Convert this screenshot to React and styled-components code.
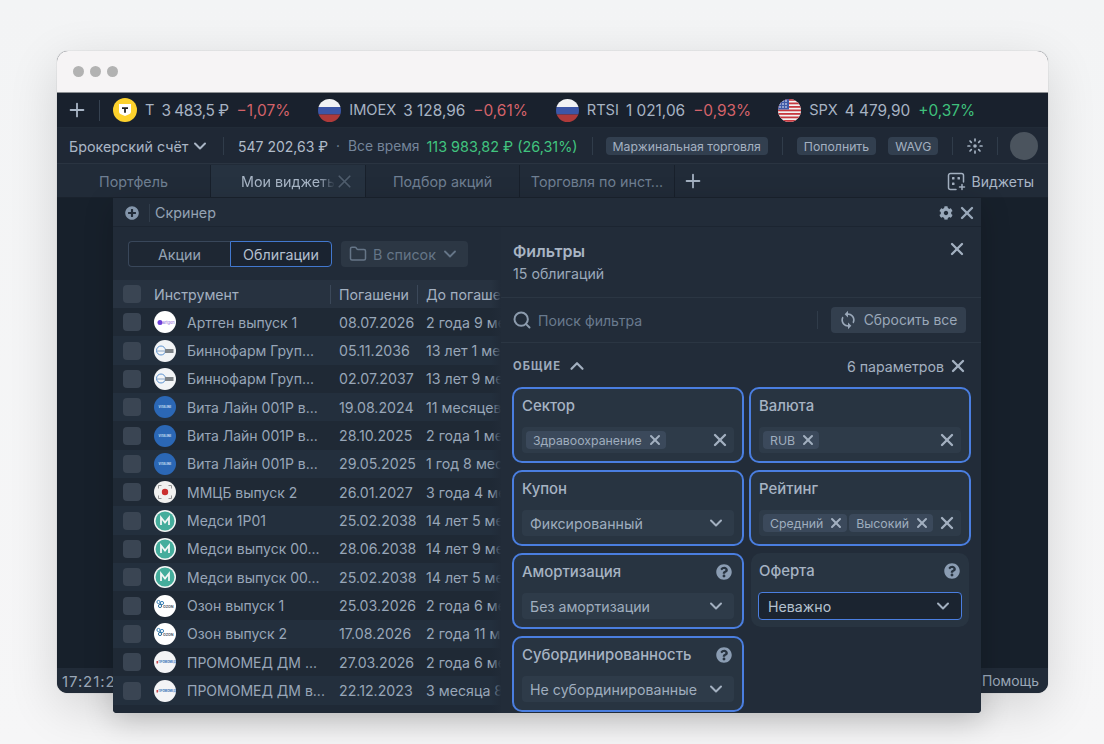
import React from "react";
import styled, { createGlobalStyle } from "styled-components";
import { Plus, ChevronDown, ChevronUp, X, Folder, Search } from "lucide-react";
import { FaCog, FaPlusCircle, FaQuestionCircle } from "react-icons/fa";
import { MdSync } from "react-icons/md";

const Global = createGlobalStyle`
  html, body { margin: 0; padding: 0; background: #f5f6f7; }
  * { box-sizing: border-box; }
  body { font-family: Inter, "Noto Sans", sans-serif; -webkit-font-smoothing: antialiased; }
`;

const Page = styled.div`
  width: 1104px; height: 744px; overflow: hidden; padding: 51px 56px 0 57px;
  background: linear-gradient(#f3f4f5, #f6f6f7);
`;
const Win = styled.div`
  position: relative; width: 991px; height: 642px; border-radius: 11px;
  box-shadow: 0 0 0 1px rgba(0,0,0,.035), 0 14px 50px rgba(0,0,0,.14);
  display: flex; flex-direction: column; background: #17202b;
`;
const TitleBar = styled.div`
  height: 42px; flex: none; background: #f6f4f5; border-radius: 11px 11px 0 0;
  display: flex; align-items: center; gap: 6px; padding: 0 0 0 16px;
  border-bottom: 1px solid #8d9093;
`;
const Dot = styled.i`width: 11px; height: 11px; border-radius: 50%; background: #b2b2b2;`;

const Ticker = styled.div`
  height: 35px; flex: none; background: #19212d; display: flex; align-items: center;
  color: #a7b3c3; font-size: 15.4px; border-bottom: 1px solid #212b37;
`;
const TickPlus = styled.div`
  width: 43px; height: 21px; flex: none; display: flex; align-items: center; padding-left: 9px;
  color: #a9b6c6; border-right: 1px solid #364251;
`;
const TickItem = styled.div`
  display: flex; align-items: center; white-space: nowrap; margin-left: ${p => p.$ml}px;
`;
const TickLabel = styled.span`font-size: 14.6px; margin: 0 7px 0 8px;`;
const TightPrice = styled.span`letter-spacing: -.45px;`;
const Delta = styled.span`margin-left: 8px; color: ${p => (p.$up ? "#3fc07c" : "#d4636a")};`;

const Account = styled.div`
  height: 36px; flex: none; background: #1f2835; display: flex; align-items: center; padding-top: 1px;
  color: #a9b5c5; font-size: 14.3px; white-space: nowrap; border-bottom: 1px solid #2a3441;
`;
const Acc = styled.div`display: flex; align-items: center; gap: 1px; padding-left: 12px; width: 166px;`;
const VLine = styled.i`width: 1px; height: 18px; background: #303c4a; flex: none; margin: ${p => p.$m || "0"};`;
const Sum = styled.span`margin-left: 14px; color: #b0bbc9; font-size: 14px;`;
const Dim = styled.span`color: #75859a; font-size: 13.8px; margin: 0 ${p => p.$r || 0}px 0 ${p => p.$l || 0}px;`;
const Green = styled.span`color: #41c47f; font-size: 14.4px;`;
const Pill = styled.span`
  height: 18px; padding: 0 7px; border-radius: 4px; background: #323f4f; color: #a4b1c1;
  font-size: 12.25px; display: flex; align-items: center; margin-left: ${p => p.$ml || 0}px;
`;
const Avatar = styled.i`width: 28px; height: 28px; border-radius: 50%; background: #4b545e; margin-left: 12px; flex: none;`;

const Tabs = styled.div`
  height: 34px; flex: none; background: #212b38; display: flex; align-items: stretch; padding-top: 1px;
  font-size: 14.3px; color: #6f7f92; border-bottom: 1px solid #1a222d;
`;
const Tab = styled.div`
  position: relative; width: ${p => p.$w}px; flex: none; display: flex; align-items: center; justify-content: center;
  border-right: 1px solid #18202b; white-space: nowrap;
  ${p => p.$active && "background: #263240; color: #a9b6c6; justify-content: flex-start; padding-left: 30px;"}
`;
const TabLabel = styled.span`
  width: 94px; overflow: hidden;
  mask-image: linear-gradient(90deg, #000 82%, transparent);
`;
const TabClose = styled.span`position: absolute; right: 10px; top: 6px; color: #4f5d6d; display: flex;`;
const TabAdd = styled.div`width: 36px; display: flex; align-items: center; justify-content: center; color: #a3b0c0;`;
const TabRight = styled.div`
  margin-left: auto; display: flex; align-items: center; gap: 6px; padding-right: 14px; color: #a9b6c6; font-size: 14px;
`;
const Main = styled.div`flex: 1;`;
const Status = styled.div`
  height: 25px; flex: none; background: #212b38; border-radius: 0 0 10px 10px; display: flex; justify-content: space-between;
  align-items: center; padding: 1px 9px 0 5px; color: #9aa7b7; font-size: 13.9px;
`;
const Clock = styled.span`font-size: 15px; letter-spacing: .9px;`;

const Modal = styled.div`
  position: absolute; left: 56px; top: 147px; width: 868px; height: 515px; background: #212b38;
  border-radius: 0 0 4px 4px; box-shadow: 0 8px 30px rgba(0,0,0,.2); display: flex; flex-direction: column; overflow: hidden;
`;
const ModalHead = styled.div`
  height: 29px; flex: none; display: flex; align-items: center; padding: 1px 4px 0 12px; color: #8496ab; font-size: 14.3px;
  border-bottom: 1px solid #1c2531; background: #222c39;
`;
const ModalTitle = styled.span`margin-left: 5px; color: #94a2b3;`;
const HeadIcons = styled.div`margin-left: auto; display: flex; align-items: center; gap: 4px; color: #9aa9ba;`;
const Body = styled.div`flex: 1; display: flex; min-height: 0;`;

const Left = styled.div`
  position: relative; width: 388px; flex: none; background: #1f2936; display: flex; flex-direction: column; overflow: hidden;
  &::after {
    content: ""; position: absolute; right: 0; top: 0; bottom: 0; width: 10px;
    background: linear-gradient(90deg, rgba(33,43,56,0), #212b38);
  }
`;
const ToolRow = styled.div`height: 53px; flex: none; padding: 14px 0 0 15px; display: flex; align-items: flex-start; background: #212b38;`;
const Seg = styled.div`
  width: 102px; height: 26px; display: flex; align-items: center; justify-content: center; font-size: 14.3px;
  border: 1px solid ${p => (p.$on ? "#4278cf" : "#39475a")}; color: ${p => (p.$on ? "#b3bfce" : "#95a3b4")};
  border-radius: ${p => (p.$on ? "0 4px 4px 0" : "4px 0 0 4px")};
  ${p => p.$on ? "background: #1a2330; border-width: 1.5px;" : "border-right: 0; background: #1e2733;"}
`;
const ListBtn = styled.div`
  width: 127px; height: 26px; margin-left: 9px; border-radius: 4px; background: #2c3744; color: #657587; font-size: 14.3px;
  display: flex; align-items: center; padding-left: 8px; gap: 6px;
`;
const BtnChev = styled(ChevronDown)`margin-left: -2px;`;
const Head = styled.div`
  height: 28px; flex: none; background: #273240; display: grid; grid-template-columns: 41px 177px 87px 1fr; align-items: center;
  color: #a3b0c0; font-size: 14.2px; white-space: nowrap; overflow: hidden;
`;
const Cell = styled.div`
  height: 100%; display: flex; align-items: center; overflow: hidden; padding-left: ${p => p.$pl || 0}px;
  ${p => p.$sep && "position: relative; &::after { content: ''; position: absolute; right: 0; top: 5px; bottom: 4px; width: 1px; background: #3b4859; }"}
`;
const Check = styled.i`width: 18px; height: 18px; border-radius: 4px; background: #3a4553; margin-left: 10px; flex: none;`;
const Row = styled.div`
  height: 28.35px; flex: none; display: grid; grid-template-columns: 41px 177px 87px 1fr; align-items: center;
  background: ${p => (p.$alt ? "#232f3d" : "#1f2935")}; color: #98a6b8; font-size: 14.2px; white-space: nowrap; overflow: hidden;
`;
const Name = styled.div`display: flex; align-items: center; gap: 11px; font-size: 14px;`;
const Logo = styled.svg`width: 22px; height: 22px; flex: none;`;

const Right = styled.div`flex: 1; display: flex; flex-direction: column; background: #222c39; min-width: 0;`;
const FHead = styled.div`
  height: 71px; flex: none; padding: 15px 14px 0 12px; display: flex; justify-content: space-between; align-items: flex-start;
  border-bottom: 1px solid #2b3643;
`;
const FTitle = styled.div`font-size: 16px; font-weight: 600; color: #a9b5c4; line-height: 18px;`;
const FSub = styled.div`font-size: 14.2px; color: #9aa8b9; margin-top: 5px; line-height: 17px;`;
const Close = styled.span`display: flex; color: ${p => p.$c || "#a3b0c0"};`;
const FClose = styled(Close)`margin-top: -3px;`;
const SearchRow = styled.div`
  height: 45px; flex: none; display: flex; align-items: center; padding: 0 15px 0 11px; border-bottom: 1px solid #2b3643;
`;
const Placeholder = styled.span`margin-left: 6px; color: #697a8e; font-size: 14.1px; flex: 1;`;
const ResetBtn = styled.div`
  width: 135px; height: 26px; margin-left: 13px; border-radius: 4px; background: #333f4e; color: #9aa8b9; font-size: 13.9px;
  display: flex; align-items: center; justify-content: center; gap: 6px; padding-right: 2px;
`;
const Section = styled.div`
  height: 44px; flex: none; display: flex; align-items: center; padding: 2px 13px 0 12px;
`;
const SecName = styled.span`font-size: 11.2px; font-weight: 700; letter-spacing: 1.1px; color: #9daabb; margin-right: 5px;`;
const Params = styled.span`margin-left: auto; font-size: 14.2px; color: #a3b0c0; margin-right: 4px;`;
const Grid = styled.div`
  display: grid; grid-template-columns: 232px 222px; grid-auto-rows: 76px; gap: 7px 5px; padding-left: 11px;
`;
const Card = styled.div`
  border-radius: 10px; background: #283441; display: flex; flex-direction: column;
  padding: ${p => (p.$plain ? "7px 7px 0" : "8px 10px 0")};
  box-shadow: inset 0 0 0 ${p => (p.$plain ? 0 : 2)}px ${p => (p.$plain ? "transparent" : "#4a7ee0")};
  ${p => p.$plain && "margin: 0 2px 2px;"}
`;
const CardHead = styled.div`
  height: 22px; flex: none; display: flex; align-items: center; justify-content: space-between; color: #a6b3c3; font-size: 14.9px;
  font-weight: 500; white-space: nowrap; padding: 0 2px 0 ${p => (p.$plain ? 1 : 0)}px;
`;
const Help = styled.span`display: flex; color: #8b9db3;`;
const Control = styled.div`
  height: ${p => (p.$focus ? 28 : 26)}px; margin-top: 10px; border-radius: 4px; background: ${p => (p.$focus ? "#1b2430" : "#2e3b49")};
  ${p => p.$focus && "border: 1px solid #4a7ee0;"}
  display: flex; align-items: center; padding: 0 ${p => (p.$chips ? 4 : 8)}px 0 ${p => (p.$chips ? 4 : p.$focus ? 9 : 8)}px; color: ${p => (p.$focus ? "#b4c0ce" : "#9fadbe")}; font-size: 14.2px; white-space: nowrap; gap: 2px;
  justify-content: space-between;
`;
const Chips = styled.div`display: flex; gap: 2px;`;
const Chip = styled.span`
  height: 18px; padding: 0 3px 0 7px; border-radius: 4px; background: #3b495b; color: #9fadbe; font-size: 12.3px;
  display: flex; align-items: center; gap: 5px; white-space: nowrap;
`;
const ChipX = styled(X)`color: #a3b0c0;`;
const CtlIcon = styled.span`display: flex; color: ${p => p.$c || "#a3b0c0"};`;

const Tinkoff = () => (
  <svg width="24" height="24" viewBox="0 0 24 24">
    <circle cx="12" cy="12" r="12" fill="#fdd22d" />
    <path d="M6 6h12v7.500c0 1.500-1 2.500-2.500 3L12 18l-3.500-1.500C7 16 6 15 6 13.500z" fill="#fff" />
    <path d="M9 9.200h6v1.800h-2.100v3.800h-1.800v-3.800H9z" fill="#222" />
  </svg>
);
const RuFlag = ({ id }) => (
  <svg width="23" height="23" viewBox="0 0 23 23">
    <defs><clipPath id={id}><circle cx="11.500" cy="11.500" r="11.500" /></clipPath></defs>
    <g clipPath={`url(#${id})`}>
      <rect width="23" height="8" fill="#f1f2f4" />
      <rect y="8" width="23" height="7.500" fill="#3c56a6" />
      <rect y="15.500" width="23" height="7.500" fill="#ae3a3a" />
    </g>
  </svg>
);
const UsFlag = () => (
  <svg width="23" height="23" viewBox="0 0 23 23">
    <defs><clipPath id="us"><circle cx="11.500" cy="11.500" r="11.500" /></clipPath></defs>
    <g clipPath="url(#us)">
      <rect width="23" height="23" fill="#f2f2f2" />
      {[0, 3.5, 7, 10.5, 14, 17.5, 21].map(y => <rect key={y} y={y} width="23" height="1.800" fill="#c6383f" />)}
      <rect width="11" height="10.500" fill="#3d5aa8" />
      {[2, 5, 8].flatMap(y => [2, 5, 8].map(x => <circle key={x + "-" + y} cx={x} cy={y} r=".8" fill="#fff" />))}
    </g>
  </svg>
);
const Burst = () => (
  <svg width="16" height="16" viewBox="0 0 16 16" stroke="#a3b0c0" strokeWidth="1.700" strokeLinecap="round">
    <circle cx="8" cy="8" r="1.800" fill="#a3b0c0" stroke="none" />
    <path d="M8 1v1.800M8 13.200V15M1 8h1.800M13.200 8H15M3 3l1.300 1.300M11.700 11.700L13 13M3 13l1.300-1.300M11.700 4.300L13 3" />
  </svg>
);
const WidgetsIcon = () => (
  <svg width="19" height="19" viewBox="0 0 19 19" fill="none" stroke="#a3b0c0" strokeWidth="1.500" strokeLinecap="round">
    <path d="M9 17.500H3.500a2 2 0 0 1-2-2v-12a2 2 0 0 1 2-2h11a2 2 0 0 1 2 2V10" />
    <path d="M15 12.500v5M12.500 15h5" />
    <g fill="#a3b0c0" stroke="none">
      <rect x="5" y="5" width="2.500" height="2.500" rx=".6" /><rect x="10.500" y="5" width="2.500" height="2.500" rx=".6" />
      <rect x="5" y="10.500" width="2.500" height="2.500" rx=".6" />
    </g>
  </svg>
);

const CompanyLogo = ({ kind }) => {
  const c = (fill = "#fff") => <circle cx="11" cy="11" r="11" fill={fill} />;
  if (kind === "artgen") return (
    <Logo viewBox="0 0 22 22">{c()}
      <circle cx="6" cy="11.500" r="2.500" fill="#6d3fd8" />
      <text x="8.500" y="12.500" fontSize="4" fill="#8b5cd8" fontFamily="Inter">artgen</text>
    </Logo>
  );
  if (kind === "binno") return (
    <Logo viewBox="0 0 22 22">{c("#f2f4f6")}
      <circle cx="7" cy="10.500" r="4.500" fill="none" stroke="#5d93d0" strokeWidth="1" />
      <path d="M3 11h16" stroke="#6e93bd" strokeWidth=".8" />
      <rect x="11" y="9" width="8.500" height="4" fill="#7c8287" />
    </Logo>
  );
  if (kind === "vita") return (
    <Logo viewBox="0 0 22 22">{c("#2b67b5")}
      <text x="11" y="12" fontSize="2.800" fontWeight="700" fill="#cfe0f5" textAnchor="middle" fontFamily="Inter">VITALINE</text>
    </Logo>
  );
  if (kind === "mmcb") return (
    <Logo viewBox="0 0 22 22">{c("#f1f1f0")}
      <circle cx="11" cy="11" r="3.200" fill="#cb2f2f" />
      <path d="M4.500 7.500v-3h3M14.500 4.500h3v3M17.500 14.500v3h-3M7.500 17.500h-3v-3" fill="none" stroke="#8b8b8b" strokeWidth=".9" />
    </Logo>
  );
  if (kind === "medsi") return (
    <Logo viewBox="0 0 22 22">{c("#f4f6f5")}
      <circle cx="11" cy="11" r="9.500" fill="#45ad9c" />
      <path d="M7 15V7.500l4 5 4-5V15" fill="none" stroke="#f4f6f5" strokeWidth="1.800" />
    </Logo>
  );
  if (kind === "ozon") return (
    <Logo viewBox="0 0 22 22">{c()}
      <circle cx="4.500" cy="7" r="1.600" fill="none" stroke="#3b82b8" strokeWidth="1" />
      <circle cx="8" cy="8" r="1.600" fill="none" stroke="#3b82b8" strokeWidth="1" />
      <circle cx="6" cy="11" r="1.600" fill="none" stroke="#2e6f9e" strokeWidth="1" />
      <text x="9" y="13" fontSize="3.600" fontWeight="700" fill="#4b5563" fontFamily="Inter">OZON</text>
    </Logo>
  );
  return (
    <Logo viewBox="0 0 22 22">{c("#f3f4f6")}
      <rect x="2.500" y="10" width="1.500" height="2.500" fill="#c8494d" />
      <text x="4.500" y="12.400" fontSize="2.800" fontWeight="700" fill="#3a74b8" fontFamily="Inter">ПРОМОМЕД</text>
    </Logo>
  );
};

const rows = [
  ["artgen", "Артген выпуск 1", "08.07.2026", "2 года 9 месяцев"],
  ["binno", "Биннофарм Груп...", "05.11.2036", "13 лет 1 месяц"],
  ["binno", "Биннофарм Груп...", "02.07.2037", "13 лет 9 месяцев"],
  ["vita", "Вита Лайн 001Р в...", "19.08.2024", "11 месяцев"],
  ["vita", "Вита Лайн 001Р в...", "28.10.2025", "2 года 1 месяц"],
  ["vita", "Вита Лайн 001Р в...", "29.05.2025", "1 год 8 месяцев"],
  ["mmcb", "ММЦБ выпуск 2", "26.01.2027", "3 года 4 месяца"],
  ["medsi", "Медси 1Р01", "25.02.2038", "14 лет 5 месяцев"],
  ["medsi", "Медси выпуск 00...", "28.06.2038", "14 лет 9 месяцев"],
  ["medsi", "Медси выпуск 00...", "25.02.2038", "14 лет 5 месяцев"],
  ["ozon", "Озон выпуск 1", "25.03.2026", "2 года 6 месяцев"],
  ["ozon", "Озон выпуск 2", "17.08.2026", "2 года 11 месяцев"],
  ["promo", "ПРОМОМЕД ДМ ...", "27.03.2026", "2 года 6 месяцев"],
  ["promo", "ПРОМОМЕД ДМ в...", "22.12.2023", "3 месяца 8 дней"],
];

const FilterCard = ({ title, help, plain, focus, chips, value }) => (
  <Card $plain={plain}>
    <CardHead $plain={plain}>{title}{help && <Help><FaQuestionCircle size={16} /></Help>}</CardHead>
    <Control $chips={!!chips} $focus={focus}>
      {chips ? (
        <Chips>
          {chips.map(c => <Chip key={c}>{c}<ChipX size={16} strokeWidth={3} /></Chip>)}
        </Chips>
      ) : value}
      <CtlIcon>{chips ? <X size={20} strokeWidth={2.800} /> : <ChevronDown size={20} strokeWidth={2.400} />}</CtlIcon>
    </Control>
  </Card>
);

export default function App() {
  return (
    <Page>
      <Global />
      <Win>
        <TitleBar><Dot /><Dot /><Dot /></TitleBar>
        <Ticker>
          <TickPlus><Plus size={22} strokeWidth={2} /></TickPlus>
          <TickItem $ml={13}><Tinkoff /><TickLabel>Т</TickLabel><TightPrice>3 483,5 ₽</TightPrice><Delta>−1,07%</Delta></TickItem>
          <TickItem $ml={28}><RuFlag id="ru1" /><TickLabel>IMOEX</TickLabel>3 128,96<Delta>−0,61%</Delta></TickItem>
          <TickItem $ml={28}><RuFlag id="ru2" /><TickLabel>RTSI</TickLabel>1 021,06<Delta>−0,93%</Delta></TickItem>
          <TickItem $ml={27}><UsFlag /><TickLabel>SPX</TickLabel>4 479,90<Delta $up>+0,37%</Delta></TickItem>
        </Ticker>
        <Account>
          <Acc>Брокерский счёт<ChevronDown size={20} strokeWidth={2.400} /></Acc>
          <VLine />
          <Sum>547 202,63 ₽</Sum>
          <Dim $l={8} $r={8}>·</Dim>
          <Dim $r={7}>Все время</Dim>
          <Green>113 983,82 ₽ (26,31%)</Green>
          <VLine $m="0 13px 0 14px" />
          <Pill>Маржинальная торговля</Pill>
          <VLine $m="0 14px 0 14px" />
          <Pill>Пополнить</Pill>
          <Pill $ml={12}>WAVG</Pill>
          <VLine $m="0 14px 0 14px" />
          <Burst />
          <VLine $m="0 0 0 14px" />
          <Avatar />
        </Account>
        <Tabs>
          <Tab $w={154}>Портфель</Tab>
          <Tab $w={155} $active><TabLabel>Мои виджеты</TabLabel><TabClose><X size={21} strokeWidth={2} /></TabClose></Tab>
          <Tab $w={154}>Подбор акций</Tab>
          <Tab $w={155}>Торговля по инст...</Tab>
          <TabAdd><Plus size={22} strokeWidth={2} /></TabAdd>
          <TabRight><WidgetsIcon />Виджеты</TabRight>
        </Tabs>
        <Main />
        <Status><Clock>17:21:25</Clock><span>Помощь</span></Status>

        <Modal>
          <ModalHead>
            <FaPlusCircle size={14} />
            <VLine $m="0 0 0 10px" />
            <ModalTitle>Скринер</ModalTitle>
            <HeadIcons><FaCog size={14} /><X size={20} strokeWidth={2.800} /></HeadIcons>
          </ModalHead>
          <Body>
            <Left>
              <ToolRow>
                <Seg>Акции</Seg>
                <Seg $on>Облигации</Seg>
                <ListBtn><Folder size={18} />В список<BtnChev size={20} strokeWidth={2.200} /></ListBtn>
              </ToolRow>
              <Head>
                <Cell><Check /></Cell>
                <Cell $sep>Инструмент</Cell>
                <Cell $sep $pl={8}>Погашени</Cell>
                <Cell $pl={8}>До погаше</Cell>
              </Head>
              {rows.map((r, i) => (
                <Row key={i} $alt={i % 2 === 1}>
                  <Cell><Check /></Cell>
                  <Cell><Name><CompanyLogo kind={r[0]} />{r[1]}</Name></Cell>
                  <Cell $pl={8}>{r[2]}</Cell>
                  <Cell $pl={8}>{r[3]}</Cell>
                </Row>
              ))}
            </Left>
            <Right>
              <FHead>
                <div>
                  <FTitle>Фильтры</FTitle>
                  <FSub>15 облигаций</FSub>
                </div>
                <FClose><X size={20} strokeWidth={2.800} /></FClose>
              </FHead>
              <SearchRow>
                <Close $c="#8c9bad"><Search size={20} strokeWidth={2.400} /></Close>
                <Placeholder>Поиск фильтра</Placeholder>
                <VLine />
                <ResetBtn><MdSync size={20} />Сбросить все</ResetBtn>
              </SearchRow>
              <Section>
                <SecName>ОБЩИЕ</SecName>
                <Close><ChevronUp size={22} strokeWidth={2.400} /></Close>
                <Params>6 параметров</Params>
                <Close><X size={20} strokeWidth={2.800} /></Close>
              </Section>
              <Grid>
                <FilterCard title="Сектор" chips={["Здравоохранение"]} />
                <FilterCard title="Валюта" chips={["RUB"]} />
                <FilterCard title="Купон" value="Фиксированный" />
                <FilterCard title="Рейтинг" chips={["Средний", "Высокий"]} />
                <FilterCard title="Амортизация" help value="Без амортизации" />
                <FilterCard title="Оферта" help plain focus value="Неважно" />
                <FilterCard title="Субординированность" help value="Не субординированные" />
              </Grid>
            </Right>
          </Body>
        </Modal>
      </Win>
    </Page>
  );
}
